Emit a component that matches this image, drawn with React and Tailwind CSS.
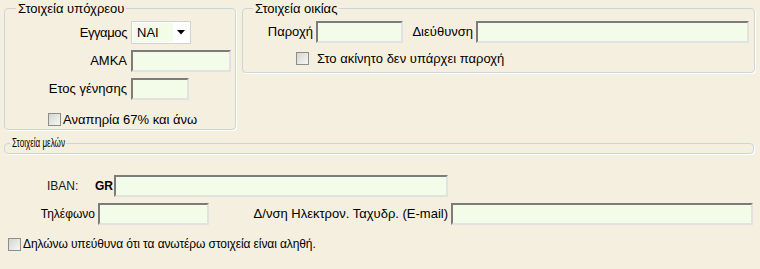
import React from "react";

function TextBox({ className = "" }) {
    return (
        <div
            className={`h-[22px] shrink-0 border-2 border-t-[#7c7c7c] border-l-[#7c7c7c] border-b-[#e2e2e2] border-r-[#e2e2e2] bg-[#f3fce9] ${className}`}
        />
    );
}

function CheckBox() {
    return (
        <span className="inline-block h-[13px] w-[13px] shrink-0 border border-[#8d8d8d] bg-gradient-to-br from-[#d6d6d0] to-[#f7f7f4]" />
    );
}

function Group({ title, legendClass, className = "", children }) {
    return (
        <fieldset className={`rounded-[4px] border border-[#cdd5d8] shadow-[1px_1px_0_#ffffff] ${className}`}>
            <legend className={`px-[2px] leading-[15px] ${legendClass}`}>{title}</legend>
            {children}
        </fieldset>
    );
}

export default function App() {
    return (
        <div
            className="h-[269px] w-[760px] overflow-hidden bg-[#f5efdf] text-[13px] text-black"
            style={{ fontFamily: '"Liberation Sans", Arial, sans-serif' }}
        >
            <div className="flex items-start gap-[6px] pl-[4px] pt-[1px]">
                <Group title="Στοιχεία υπόχρεου" legendClass="ml-[11px]" className="h-[129px] w-[232px]">
                    <div className="mt-[5px] flex flex-col gap-[6px]">
                        <div className="flex items-center gap-[4px]">
                            <span className="w-[122px] text-right tracking-[-0.4px]">Εγγαμος</span>
                            <div className="flex h-[23px] w-[60px] items-center border border-[#d2d2d2] bg-white p-[1px]">
                                <div className="flex h-full w-[40px] items-center bg-[#f3fce9] pl-[4px]">ΝΑΙ</div>
                                <div className="flex flex-1 items-center justify-center">
                                    <svg width="8" height="5" viewBox="0 0 8 5">
                                        <path d="M0 0h8L4 4.5z" fill="#000" />
                                    </svg>
                                </div>
                            </div>
                        </div>
                        <div className="flex items-center gap-[4px]">
                            <span className="w-[122px] text-right">ΑΜΚΑ</span>
                            <TextBox className="w-[100px]" />
                        </div>
                        <div className="flex items-center gap-[4px]">
                            <span className="w-[122px] text-right">Ετος γένησης</span>
                            <TextBox className="w-[58px]" />
                        </div>
                        <div className="mt-[4px] flex items-center gap-[2px] pl-[43px]">
                            <CheckBox />
                            <span>Αναπηρία 67% και άνω</span>
                        </div>
                    </div>
                </Group>
                <Group title="Στοιχεία οικίας" legendClass="ml-[10px]" className="h-[72px] w-[513px]">
                    <div className="mt-[5px] flex items-center">
                        <span className="w-[70px] text-right">Παροχή</span>
                        <TextBox className="ml-[3px] w-[87px]" />
                        <span className="w-[70px] text-right">Διεύθυνση</span>
                        <TextBox className="ml-[3px] w-[273px]" />
                    </div>
                    <div className="mt-[6px] flex items-center gap-[8px] pl-[53px]">
                        <CheckBox />
                        <span>Στο ακίνητο δεν υπάρχει παροχή</span>
                    </div>
                </Group>
            </div>

            <div className="mt-[6px] pl-[4px] pr-[6px]">
                <fieldset className="rounded-[4px] border border-[#cdd5d8] pb-[3px] shadow-[1px_1px_0_#ffffff]">
                    <legend className="ml-[5px] w-[56px] px-[2px] leading-[14px]">
                        <span className="inline-block origin-left scale-x-[0.62] whitespace-nowrap text-[13px]">
                            Στοιχεία μελών
                        </span>
                    </legend>
                </fieldset>
            </div>

            <div className="mt-[21px] flex items-center pl-[47px]">
                <span className="w-[48px] text-[12px] text-[#1a1a1a]">IBAN:</span>
                <span className="w-[16px] text-[12px] font-bold">GR</span>
                <TextBox className="ml-[3px] w-[334px]" />
            </div>

            <div className="mt-[6px] flex items-center pl-[4px] pr-[7px]">
                <span className="w-[91px] text-right text-[12px]">Τηλέφωνο</span>
                <TextBox className="ml-[3px] w-[111px]" />
                <span className="ml-auto">Δ/νση Ηλεκτρον. Ταχυδρ. (E-mail)</span>
                <TextBox className="ml-[3px] w-[302px]" />
            </div>

            <div className="mt-[10px] flex items-center gap-[2px] pl-[8px]">
                <CheckBox />
                <span className="text-[12px] tracking-[-0.1px]">Δηλώνω υπεύθυνα ότι τα ανωτέρω στοιχεία είναι αληθή.</span>
            </div>
        </div>
    );
}
